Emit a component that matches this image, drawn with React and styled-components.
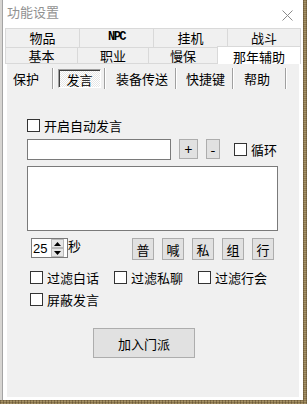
import styled, { createGlobalStyle } from "styled-components";

const GlobalStyle = createGlobalStyle`
  html, body {
    margin: 0;
    padding: 0;
  }
  body {
    width: 307px;
    height: 404px;
    overflow: hidden;
    background-color: #8c7850;
    background-image:
      repeating-linear-gradient(90deg, rgba(60, 45, 20, 0.35) 0 1px, transparent 1px 3px),
      repeating-linear-gradient(0deg, rgba(210, 190, 140, 0.35) 0 1px, transparent 1px 2px);
    font-family: "Noto Sans CJK SC", "Liberation Sans", sans-serif;
    color: #000;
  }
`;

const Screen = styled.div`
  display: flex;
  height: 400px;
`;

const BackStrip = styled.div`
  width: 2px;
  background: #d7d5d2;
`;

const Window = styled.div`
  width: 301px;
  box-sizing: border-box;
  border-left: 1px solid #a4a4a4;
  background: #fff;
  display: flex;
  flex-direction: column;
`;

const TitleBar = styled.div`
  height: 28px;
  display: flex;
  justify-content: space-between;
  align-items: flex-start;
  padding: 3px 10px 0 4px;
  box-sizing: border-box;
`;

const Title = styled.span`
  font-size: 13px;
  line-height: 18px;
  color: #929292;
`;

const CloseIcon = styled.svg`
  margin-top: 7px;
`;

const TabControl = styled.div`
  flex: 1;
  margin: 0 2px 1px 2px;
  display: flex;
  flex-direction: column;
`;

const TabRow = styled.div`
  display: flex;
  height: ${(p) => p.$h}px;
`;

const Tab = styled.div`
  width: ${(p) => p.$w}px;
  box-sizing: border-box;
  margin-left: -1px;
  &:first-child {
    margin-left: 0;
  }
  border: 1px solid #d9d9d9;
  border-bottom: none;
  background: ${(p) => (p.$active ? "#fff" : "#f0f0f0")};
  display: flex;
  justify-content: center;
  align-items: center;
  padding-bottom: ${(p) => p.$pb || 0}px;
  font-size: 13px;
  line-height: 13px;
  ${(p) =>
    p.$active &&
    `
    position: relative;
    z-index: 1;
    height: 18px;
    margin-top: -1px;
    padding-top: 1px;
  `}
`;

const Latin = styled.span`
  font-family: "Liberation Mono", monospace;
  font-weight: bold;
  font-size: 12px;
  letter-spacing: -1.5px;
`;

const TabBody = styled.div`
  flex: 1;
  border-top: 1px solid #d9d9d9;
  padding: 0 2px 2px 2px;
  display: flex;
`;

const Page = styled.div`
  flex: 1;
  background: #f0f0f0;
  display: flex;
  flex-direction: column;
`;

const SubTabs = styled.div`
  display: flex;
  height: 21px;
  margin: 4px 0 0 1px;
`;

const SubTab = styled.div`
  width: ${(p) => p.$w}px;
  box-sizing: border-box;
  padding-left: ${(p) => p.$pl}px;
  display: flex;
  align-items: center;
  font-size: 13px;
  border-right: 1px solid #a0a0a0;
  box-shadow: 1px 0 0 #fff;
`;

const SunkenBox = styled.div`
  width: 43px;
  height: 19px;
  box-sizing: border-box;
  display: flex;
  justify-content: center;
  align-items: center;
  border-top: 1px solid #a0a0a0;
  border-left: 1px solid #a0a0a0;
  border-bottom: 1px solid #fff;
  border-right: 1px solid #fff;
  box-shadow: inset 1px 1px 0 #404040;
  background-color: #fff;
  background-image: conic-gradient(#e6e6e6 25%, #fff 0 50%, #e6e6e6 0 75%, #fff 0);
  background-size: 2px 2px;
  padding-top: 1px;
`;

const Content = styled.div`
  padding-left: 20px;
  display: flex;
  flex-direction: column;
  font-size: 13px;
`;

const Row = styled.div`
  display: flex;
  align-items: ${(p) => p.$align || "center"};
  height: ${(p) => p.$h}px;
  margin-top: ${(p) => p.$mt}px;
  margin-left: ${(p) => p.$ml || 0}px;
`;

const CheckItem = styled.label`
  display: flex;
  align-items: center;
  gap: 4px;
  width: ${(p) => (p.$w ? `${p.$w}px` : "auto")};
  margin-left: ${(p) => p.$ml || 0}px;
  white-space: nowrap;
`;

const Box = styled.span`
  width: 13px;
  height: 13px;
  box-sizing: border-box;
  border: 1px solid #333;
  background: #fff;
  flex: none;
`;

const TextInput = styled.div`
  width: 144px;
  height: 21px;
  box-sizing: border-box;
  border: 1px solid #7a7a7a;
  background: #fff;
`;

const SmallButton = styled.div`
  width: ${(p) => p.$w}px;
  height: ${(p) => p.$h}px;
  margin-left: ${(p) => p.$ml || 0}px;
  box-sizing: border-box;
  border: 1px solid #adadad;
  background: #e1e1e1;
  display: flex;
  justify-content: center;
  align-items: center;
  font-size: ${(p) => p.$fs || 13}px;
  flex: none;
`;

const TextArea = styled.div`
  width: 251px;
  height: 65px;
  margin-top: 6px;
  box-sizing: border-box;
  border: 1px solid #7a7a7a;
  background: #fff;
`;

const Spin = styled.div`
  width: 37px;
  height: 20px;
  margin-left: 4px;
  box-sizing: border-box;
  border: 1px solid #7a7a7a;
  background: #fff;
  display: flex;
  align-items: center;
  padding: 0 3px 0 1px;
  font-family: "Liberation Sans", sans-serif;
  font-size: 13px;
`;

const SpinValue = styled.span`
  flex: 1;
`;

const SpinArrows = styled.div`
  width: 13px;
  height: 18px;
  display: flex;
  flex-direction: column;
`;

const SpinHalf = styled.div`
  flex: 1;
  box-sizing: border-box;
  border: 1px solid #b9b9b9;
  background: #e6e6e6;
  display: flex;
  justify-content: center;
  align-items: center;
`;

const Unit = styled.span`
  line-height: 16px;
`;

const ButtonGroup = styled.div`
  display: flex;
  gap: 8px;
  margin-left: 51px;
`;

const JoinButton = styled(SmallButton)`
  margin-top: 20px;
  margin-left: 66px;
`;

const Check = ({ label, w, ml }) => (
  <CheckItem $w={w} $ml={ml}>
    <Box />
    {label && <span>{label}</span>}
  </CheckItem>
);

const Arrow = ({ up }) => (
  <svg width="7" height="4" viewBox="0 0 7 4">
    <polygon points={up ? "3.5,0 7,4 0,4" : "0,0 7,0 3.5,4"} fill="#000" />
  </svg>
);

const rowOne = [
  { name: "物品", w: 75 },
  { name: "NPC", w: 75 },
  { name: "挂机", w: 75 },
  { name: "战斗", w: 74 },
];
const rowTwo = [
  { name: "基本", w: 73 },
  { name: "职业", w: 72 },
  { name: "慢保", w: 70 },
  { name: "那年辅助", w: 84, active: true },
];
const subTabs = [
  { name: "保护", w: 45, pl: 5 },
  { name: "发言", w: 52, pl: 5, active: true },
  { name: "装备传送", w: 71, pl: 11 },
  { name: "快捷键", w: 57, pl: 10 },
  { name: "帮助", w: 53, pl: 11 },
];
const channels = ["普", "喊", "私", "组", "行"];

export default function App() {
  return (
    <>
      <GlobalStyle />
      <Screen>
        <BackStrip />
        <Window>
          <TitleBar>
            <Title>功能设置</Title>
            <CloseIcon width="11" height="11" viewBox="0 0 11 11">
              <path d="M0.5 0.5 L10.5 10.5 M10.5 0.5 L0.5 10.5" stroke="#8a8a8a" strokeWidth="1" />
            </CloseIcon>
          </TitleBar>
          <TabControl>
            <TabRow $h={19}>
              {rowOne.map((t) => (
                <Tab key={t.name} $w={t.w} $pb={2}>
                  {t.name === "NPC" ? <Latin>NPC</Latin> : t.name}
                </Tab>
              ))}
            </TabRow>
            <TabRow $h={16}>
              {rowTwo.map((t) => (
                <Tab key={t.name} $w={t.w} $active={t.active}>
                  {t.name}
                </Tab>
              ))}
            </TabRow>
            <TabBody>
              <Page>
                <SubTabs>
                  {subTabs.map((t) => (
                    <SubTab key={t.name} $w={t.w} $pl={t.pl}>
                      {t.active ? <SunkenBox>{t.name}</SunkenBox> : t.name}
                    </SubTab>
                  ))}
                </SubTabs>
                <Content>
                  <Row $h={17} $mt={28}>
                    <Check label="开启自动发言" />
                  </Row>
                  <Row $h={21} $mt={5} $align="flex-start">
                    <TextInput />
                    <SmallButton $w={19} $h={20} $ml={8} $fs={14}>+</SmallButton>
                    <SmallButton $w={14} $h={20} $ml={8} $fs={14}>-</SmallButton>
                    <Row $h={21} $mt={0} $ml={14}>
                      <Check label="循环" />
                    </Row>
                  </Row>
                  <TextArea />
                  <Row $h={22} $mt={7} $align="flex-start">
                    <Spin>
                      <SpinValue>25</SpinValue>
                      <SpinArrows>
                        <SpinHalf>
                          <Arrow up />
                        </SpinHalf>
                        <SpinHalf>
                          <Arrow />
                        </SpinHalf>
                      </SpinArrows>
                    </Spin>
                    <Unit>秒</Unit>
                    <ButtonGroup>
                      {channels.map((c) => (
                        <SmallButton key={c} $w={22} $h={22}>
                          {c}
                        </SmallButton>
                      ))}
                    </ButtonGroup>
                  </Row>
                  <Row $h={17} $mt={9} $ml={3}>
                    <Check label="过滤白话" w={84} />
                    <Check label="过滤私聊" w={84} />
                    <Check label="过滤行会" />
                  </Row>
                  <Row $h={17} $mt={5} $ml={3}>
                    <Check label="屏蔽发言" />
                  </Row>
                  <JoinButton $w={102} $h={30}>
                    加入门派
                  </JoinButton>
                </Content>
              </Page>
            </TabBody>
          </TabControl>
        </Window>
      </Screen>
    </>
  );
}
